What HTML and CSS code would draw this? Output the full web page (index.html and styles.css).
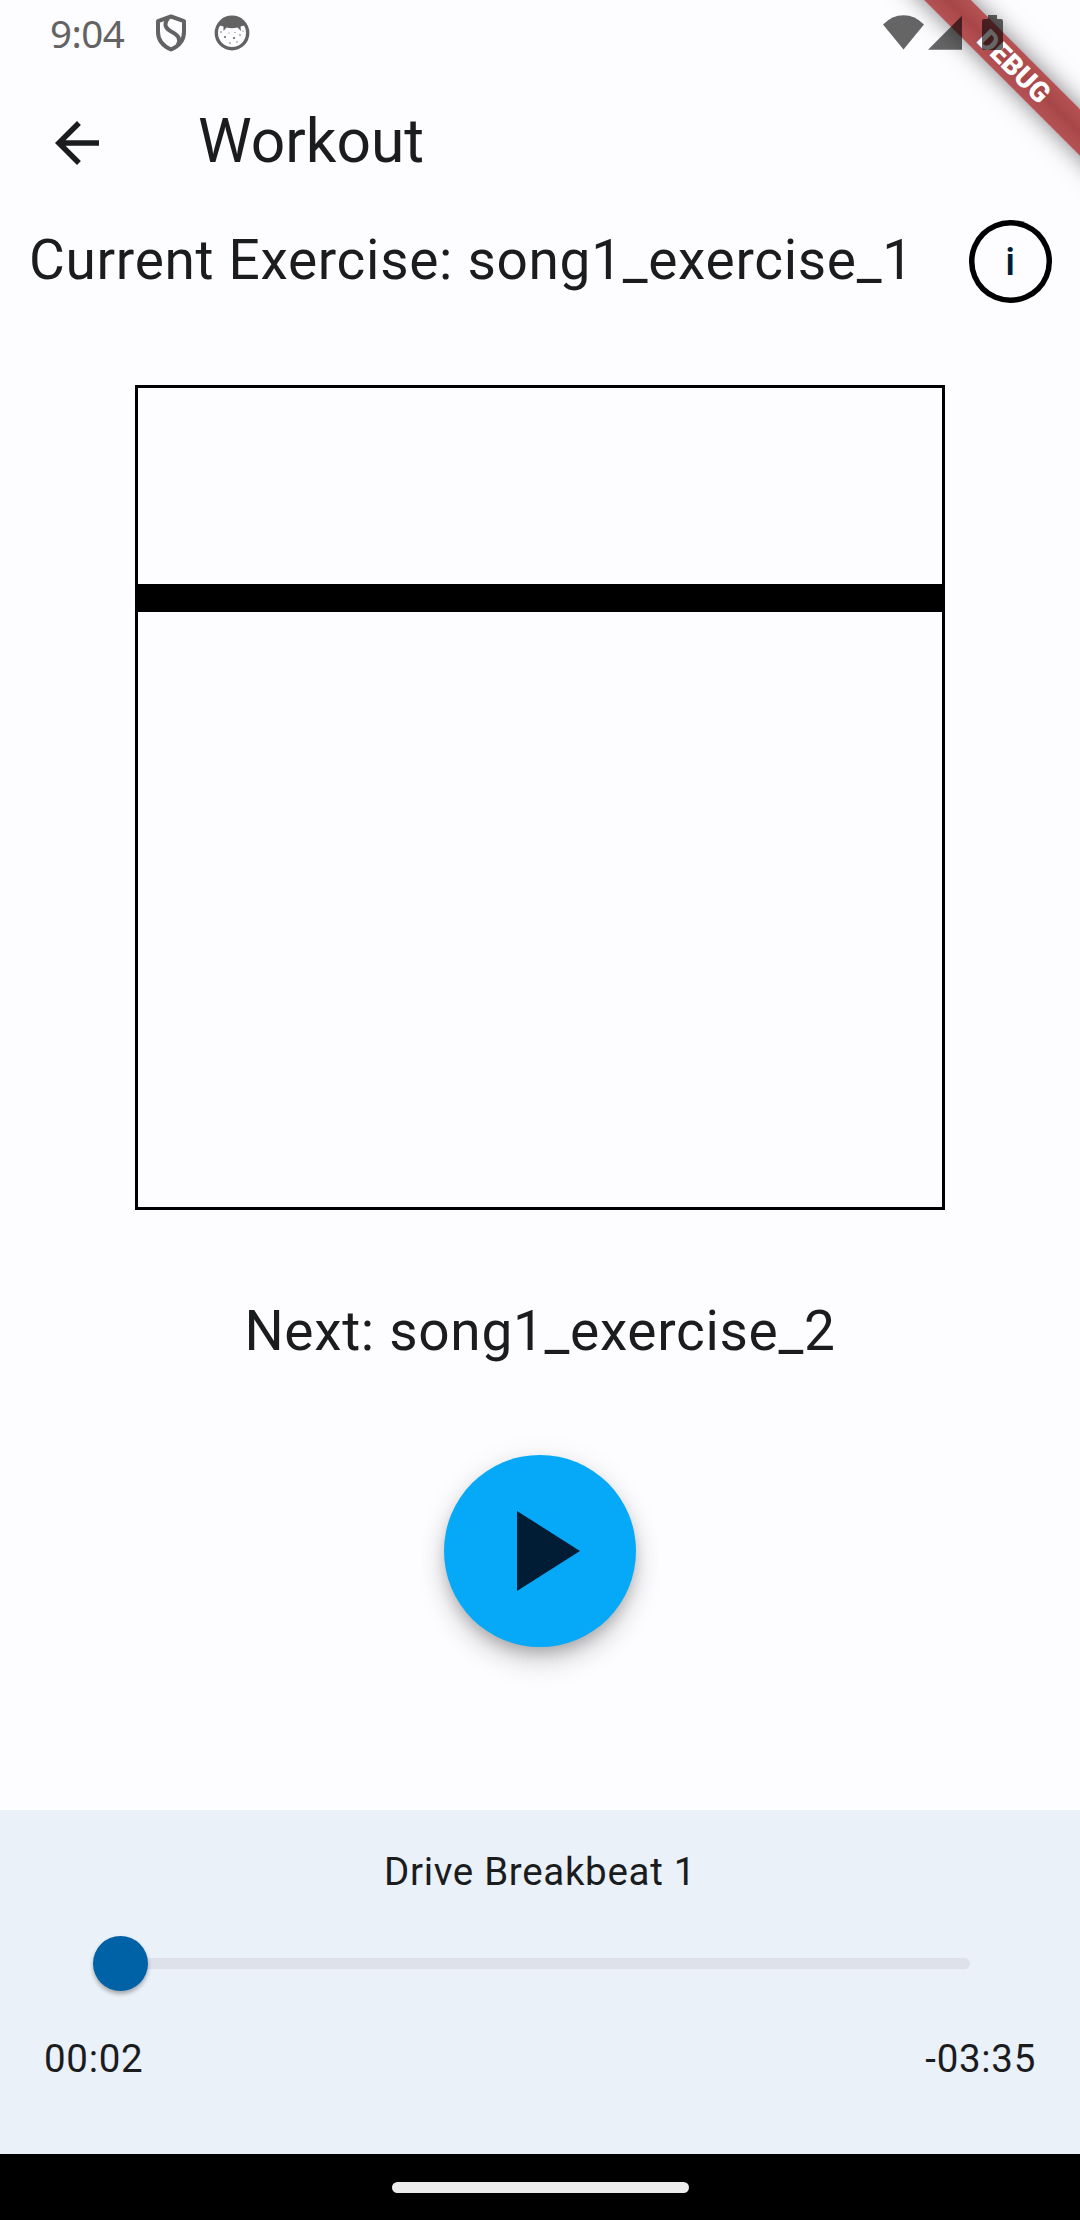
FILE: index.html
```html
<!DOCTYPE html>
<html lang="en">
<head>
<meta charset="utf-8">
<title>Workout</title>
<link rel="stylesheet" href="styles.css">
</head>
<body>
<div class="screen">
  <div class="debug-ribbon"><span class="debug-label">DEBUG</span></div>
  <header class="status-bar">
    <span class="clock">9:04</span>
    <svg class="status-icon shield" width="32" height="38" viewBox="0 0 32 38" fill="none" stroke="#636363" stroke-width="4" stroke-linejoin="round">
      <path d="M16 2.500 29 7.200V18c0 8-5 14-13 17.500C8 32 3 26 3 18V7.200Z"/>
      <path d="M13 4c-5 7-2 11 4 14s9 7 6 13"/>
    </svg>
    <svg class="status-icon cat" width="36" height="36" viewBox="0 0 36 36">
      <circle cx="18" cy="18" r="15.700" fill="none" stroke="#636363" stroke-width="3.400"/>
      <path d="M4 10Q9 1 18 1T32 10L26.500 11.500 27 16 23.500 12.500Q18 14 12.500 12.500L9.500 16 9.500 11.500Z" fill="#636363"/>
      <g fill="#636363"><circle cx="11" cy="22" r="1"/><circle cx="20" cy="23" r="1.100"/><circle cx="26" cy="20" r=".8"/><circle cx="16" cy="28" r=".8"/><circle cx="7" cy="17" r=".8"/><circle cx="15" cy="18" r=".6"/><circle cx="23" cy="27" r=".7"/><circle cx="21" cy="17.500" r=".6"/><circle cx="29" cy="16" r=".6"/></g>
    </svg>
    <svg class="signals" width="122" height="36" viewBox="0 0 122 36" fill="#000" fill-opacity=".6">
      <path d="M0 9.500Q9 .2 20.500.2T41 9.500L20.500 34.500Z"/>
      <path d="M45 34.700 79 .7V34.700Z"/>
      <path d="M105 0h9v4h4q2 0 2 2V33q0 2-2 2H101q-2 0-2-2V6q0-2 2-2h4Z"/>
    </svg>
  </header>
  <nav class="app-bar">
    <svg class="back" width="44" height="44" viewBox="0 0 16 16" fill="#1a1c1e"><path d="M16 7H3.830L9.420 1.410 8 0 0 8 8 16 9.410 14.590 3.830 9H16Z"/></svg>
    <h1 class="title">Workout</h1>
  </nav>
  <main class="content">
    <div class="current">
      <span class="body-large">Current Exercise: song1_exercise_1</span>
      <button class="info">i</button>
    </div>
    <div class="stage"><div class="stage-bar"></div></div>
    <p class="body-large next">Next: song1_exercise_2</p>
    <button class="play" aria-label="Play">
      <svg width="63" height="80" viewBox="0 0 63 80"><path d="M0 0 63 40 0 80Z" fill="#001d35"/></svg>
    </button>
  </main>
  <section class="player">
    <p class="track-name">Drive Breakbeat 1</p>
    <div class="slider"><div class="thumb"></div><div class="rail"></div></div>
    <div class="times"><span>00:02</span><span>-03:35</span></div>
  </section>
  <footer class="gesture-bar"><div class="handle"></div></footer>
</div>
</body>
</html>
```
FILE: styles.css
```css
* { box-sizing: border-box; }
body { margin: 0; }
h1, p { margin: 0; font-weight: 400; }
button { padding: 0; font-family: inherit; }
.screen {
  position: relative;
  width: 1080px;
  height: 2220px;
  display: flex;
  flex-direction: column;
  overflow: hidden;
  background: #fdfcff;
  color: #1a1c1e;
  font-family: Roboto, sans-serif;
}
.debug-ribbon {
  position: absolute;
  top: 49.8px;
  right: -104.3px;
  width: 340px;
  height: 33px;
  transform: rotate(45deg);
  background: linear-gradient(#b65254, #a74648 50%, #b65254);
  box-shadow: 0 0 24px rgba(0, 0, 0, .5);
  display: flex;
  align-items: center;
  justify-content: center;
}
.debug-label { font-size: 28px; font-weight: 900; color: #fff; line-height: 33px; }
.status-bar {
  position: relative;
  height: 66px;
  padding: 0 75px 0 50px;
  display: flex;
  align-items: center;
}
.clock { font-family: "Noto Sans", sans-serif; font-size: 38.5px; letter-spacing: -.5px; color: #636363; line-height: 66px; width: 105px; }
.cat { margin-left: 27px; }
.signals { margin-left: auto; }
.app-bar { height: 154px; padding-left: 55px; display: flex; align-items: center; gap: 99px; }
.back { flex: none; }
.title { font-size: 60.5px; line-height: 77px; padding-bottom: 3px; }
.content { height: 1590px; display: flex; flex-direction: column; align-items: center; }
.body-large { font-size: 55px; line-height: 80px; letter-spacing: .6875px; white-space: nowrap; }
.current { width: 100%; padding: 0 28.5px 0 29px; display: flex; align-items: center; justify-content: space-between; }
.current .body-large { padding-bottom: 2px; }
.info {
  width: 82.5px;
  height: 82.5px;
  border: 0;
  border-radius: 50%;
  box-shadow: inset 0 0 0 5.5px #000;
  background: transparent;
  color: #001d35;
  font-size: 38.5px;
  font-weight: 500;
}
.stage { width: 810px; height: 825px; margin-top: 82.5px; border: 3px solid #000; padding-top: 196px; }
.stage-bar { height: 28px; background: #000; }
.next { margin-top: 81px; }
.play {
  width: 192.5px;
  height: 192.5px;
  margin-top: 83.5px;
  padding-left: 17px;
  border: 0;
  border-radius: 50%;
  background: #05a9f7;
  display: flex;
  align-items: center;
  justify-content: center;
  box-shadow: 0 8px 14px -3px rgba(0, 0, 0, .2), 0 16px 27px rgba(0, 0, 0, .14), 0 3px 30px rgba(0, 0, 0, .08);
}
.player { height: 344px; padding: 34px 44px 0; background: #eaf1f8; font-size: 38.5px; line-height: 55px; letter-spacing: .6875px; }
.track-name { text-align: center; }
.slider { height: 55px; margin: 37px 66px 0 49px; display: flex; align-items: center; }
.thumb { width: 55px; height: 55px; border-radius: 50%; background: #0062a6; box-shadow: 0 3px 4px rgba(0, 0, 0, .3); flex: none; position: relative; }
.rail { flex: 1; height: 11px; margin-left: -5px; border-radius: 0 6px 6px 0; background: #dfe1ea; }
.times { margin-top: 40px; display: flex; justify-content: space-between; }
.gesture-bar { flex: 1; background: #000; display: flex; align-items: center; justify-content: center; }
.handle { width: 297px; height: 11px; border-radius: 6px; background: #ececec; }
```
